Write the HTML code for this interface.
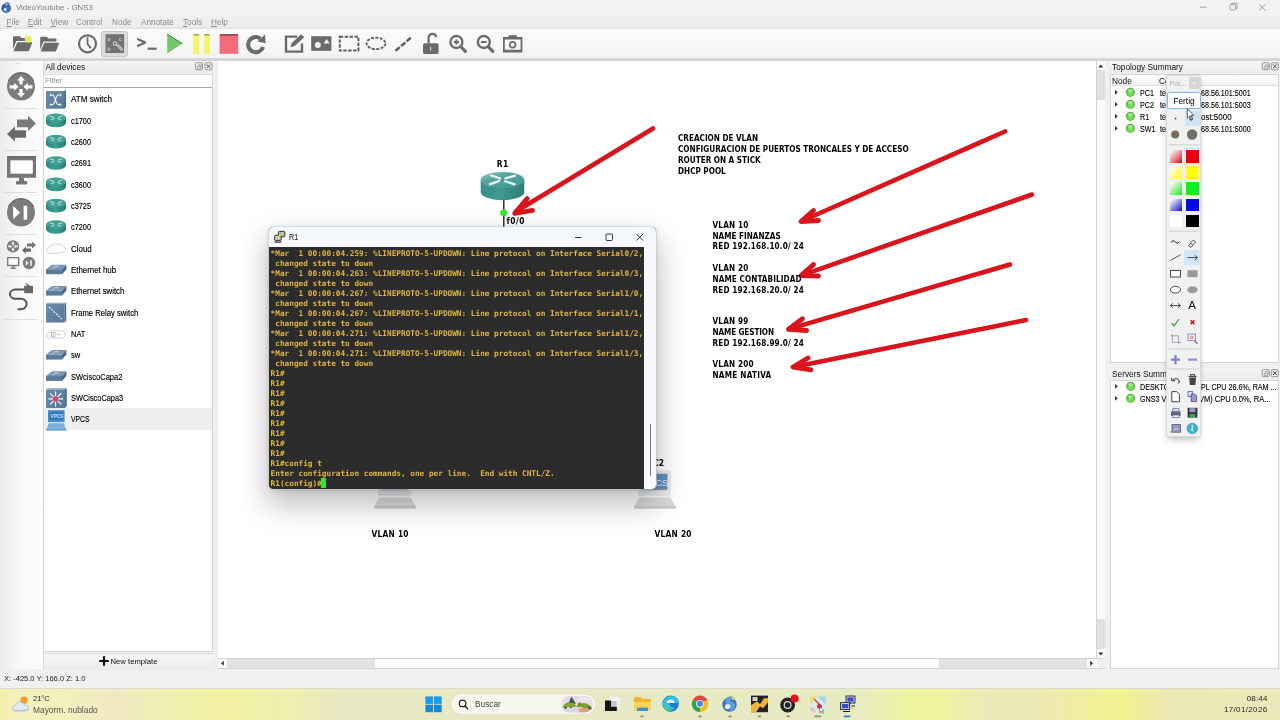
<!DOCTYPE html>
<html lang="es">
<head>
<meta charset="utf-8">
<title>VideoYoutube - GNS3</title>
<style>
*{box-sizing:border-box;margin:0;padding:0}
html,body{width:1280px;height:720px;overflow:hidden;background:#f0f0f0}
body{position:relative;font-family:"Liberation Sans",sans-serif;font-size:8px;color:#111;line-height:1}
#root{position:absolute;left:0;top:0;width:1280px;height:720px;will-change:transform}
.abs{position:absolute}
.t{position:absolute;white-space:pre;line-height:10px;height:10px}
#titlebar{left:0;top:0;width:1280px;height:15px;background:#f3f3f3}
#menubar{left:0;top:15px;width:1280px;height:14px;background:linear-gradient(#f1f1f1 0%,#efefef 20%,#eeeeee 75%,#e2e2e2 100%)}
#menubar .t{color:#8a8a8a;top:3px;font-size:8.2px}
#menubar u{text-decoration-thickness:0.6px;text-underline-offset:1px}
#toolbar{left:0;top:29px;width:1280px;height:30px;background:linear-gradient(#fbfbfb,#f8f8f8 40%,#f2f2f2)}
#tbline{left:0;top:58px;width:1280px;height:3px;background:linear-gradient(#dcdcdc,#d3d3d3 50%,#d8d8d8)}
#lefttb{left:0;top:61px;width:43px;height:608px;background:linear-gradient(90deg,#ececec,#f8f8f8 50%,#fcfcfc)}
.sep{position:absolute;left:4px;width:34px;height:1px;background:#dcdcdc}
.dv{left:71px;font-size:8.200px;color:#000;-webkit-text-stroke:.150px #000;transform:scaleX(.950);transform-origin:0 50%}
#canvas{left:218px;top:61px;width:878px;height:598px;background:#fff}
.ann{font-family:"DejaVu Sans Condensed","DejaVu Sans",sans-serif;font-weight:bold;color:#000}

.ann.n{font-size:8.100px}
#con{left:269px;top:227px;width:387px;height:261.500px;border-radius:4.500px;overflow:hidden;box-shadow:0 0 0 .600px #c9ccd2,0 14px 30px 2px rgba(0,0,0,.260),0 1px 5px rgba(0,0,0,.160);background:#2b2b2b}
#contitle{left:0;top:0;width:387px;height:20.500px;background:#f4f7fc}
#conbody{left:0;top:20.300px;width:375px;height:241.200px;background:#2c2c2c;padding:1.400px 0 0 1.600px;font-family:"DejaVu Sans Mono","Liberation Mono",monospace;font-weight:bold;font-size:7.740px;color:#e0b640;overflow:hidden}
.ln{position:relative;height:10px;line-height:10px;white-space:pre}
.cur{position:absolute;left:50.800px;top:-.300px;width:4.700px;height:10.200px;background:#2ee82e}

.rt{font-size:8.300px;color:#000;-webkit-text-stroke:.120px #000;transform:scaleX(.86);transform-origin:0 50%}
.tk{font-size:8px;color:#222}
#pal{left:1165.900px;top:75.200px;width:35.500px;height:362.300px;background:#f1f1f1;border:.700px solid #dadada;border-radius:2px;box-shadow:0 4px 7px -2px rgba(0,0,0,.280),0 0 2px rgba(0,0,0,.080)}
#statusbar{left:0;top:670px;width:1280px;height:18px;background:#f0f0f0}
#taskbar{left:0;top:688px;width:1280px;height:32px;background:linear-gradient(90deg,#f3f0a8 0%,#f4f1be 1.500%,#f3f0bc 5%,#f0e8c4 9%,#efeeb0 12.500%,#f2f2a0 17.500%,#eeeeb0 23%,#e7e9c2 26.500%,#e6e9c4 45%,#e7ebc2 67%,#eef5a0 71%,#eff39c 73%,#ece9b8 77.400%,#ede9b4 81%,#f1f294 86.400%,#f1f290 87.700%,#ece8b4 91.500%,#ede9bc 100%);border-top:1px solid #dcdccc}
</style>
</head>
<body>
<div id="root">
<!-- title bar -->
<div id="titlebar" class="abs">
  <div class="t" style="left:16px;top:3px;color:#7a7a7a;font-size:8.100px;transform:scaleX(.970);transform-origin:0 50%">VideoYoutube - GNS3</div>
</div>
<svg class="abs" style="left:1190px;top:0" width="90" height="15" viewBox="1190 0 90 15"><g fill="none" stroke="#9a9a9a" stroke-width=".900"><path d="M1200 7.200h6.500"/><rect x="1230" y="4.600" width="5.400" height="5.400" rx="1"/><path d="M1231.600 4.400v-1.200h5.400v5.400h-1.400"/><path d="M1259 4l6.500 6.500M1265.500 4l-6.500 6.500"/></g></svg>
<svg class="abs" style="left:1px;top:1px" width="12" height="13" viewBox="0 0 12 13"><circle cx="5.200" cy="7.200" r="4.800" fill="#2f5aa2"/><path d="M3.400 2.400 q3.600-2.600 5.800 .400 q-2.600-.400-3 1.400 q4 .400 3.600 3.800 q-.600 3-4.200 3 q2.200-2 0-3.400 q-3.400-1.200-2.200-5.200z" fill="#3a6fb8"/><path d="M2 9 q2.600 3.400 6.400 1.600 q-3 .400-4-2z" fill="#3aa0a4"/><circle cx="4.200" cy="8.200" r="1.500" fill="#d6eef4"/><circle cx="5.600" cy="3.200" r="1" fill="#c8d4f4"/></svg>
<div id="menubar" class="abs">
  <div class="t" style="left:6.600px"><u>F</u>ile</div>
  <div class="t" style="left:27.700px"><u>E</u>dit</div>
  <div class="t" style="left:50.500px"><u>V</u>iew</div>
  <div class="t" style="left:76px">Control</div>
  <div class="t" style="left:112px">Node</div>
  <div class="t" style="left:141px">Annotate</div>
  <div class="t" style="left:183px"><u>T</u>ools</div>
  <div class="t" style="left:211px"><u>H</u>elp</div>
</div>
<div id="toolbar" class="abs"></div>
<div id="tbline" class="abs"></div>
<svg class="abs" style="left:0;top:0" width="560" height="61" viewBox="0 0 560 61">
<g fill="#6b6b6b" stroke="none">
<!-- new project folder -->
<path d="M13 37.2 q0-1 1-1 h6 l1.6 1.8 h7.2 q1 0 1 1 v2 h-13.4 l-3.4 8.2z"/>
<path d="M17.4 42.2 h15 l-3.6 9 h-15.4z"/>
<circle cx="28.2" cy="39.2" r="3.4" fill="#e6ec5a"/>
<!-- open folder -->
<path d="M40.2 37.8 q0-1 1-1 h5.6 l1.6 1.8 h7 q1 0 1 1 v2 h-12.8 l-3.4 8.2z"/>
<path d="M44.4 42.8 h15 l-3.6 8.6 h-15.2z"/>
<!-- clock -->
<circle cx="87.5" cy="43.8" r="8.5" fill="none" stroke="#6b6b6b" stroke-width="2.2"/>
<path d="M87.5 38 v6.2 l3 3.4" fill="none" stroke="#6b6b6b" stroke-width="1.8" stroke-linecap="round" stroke-linejoin="round"/>
<!-- abc pressed -->
<rect x="101.5" y="31.5" width="26" height="25" rx="2" fill="#dcdcdc" stroke="#c6c6c6" stroke-width="1"/>
<rect x="105.5" y="34.2" width="18.6" height="18.8" fill="#727272"/>
<g fill="none" stroke="#c9c9c9" stroke-width="1.2" stroke-linecap="round">
<circle cx="115" cy="43.6" r="1.7"/>
<path d="M116.4 45 l5.4 5.6 M118 44.4 l4.6 4.8"/>
</g>
<!-- console -->
<path d="M137 37.8 l9 3.6 v2.2 l-9 3.6 v-2.3 l5.6-2.4 l-5.6-2.4z"/>
<rect x="147.6" y="47.6" width="9" height="2.2"/>
<!-- reload -->
<path d="M263 47 a7.600 7.600 0 1 1 -2.600 -8.400" fill="none" stroke="#6b6b6b" stroke-width="4"/>
<path d="M257.400 41.400 l8.200 1.800 l-.600-8.600z"/>
<!-- edit note -->
<path d="M284.800 36.600 h12.400 M286 35.400 v17.400 M284.800 51.600 h18.400 M302 43.400 v9.400" fill="none" stroke="#6b6b6b" stroke-width="2.400"/>
<path d="M290.400 47.200 l1.400-4.200 l9.400-8.800 l3 3 l-9.600 8.800z"/>
<!-- image -->
<rect x="311.2" y="36.2" width="20.2" height="14.6"/>
<circle cx="317.8" cy="45" r="3" fill="#f4f4f4"/>
<path d="M323.6 43.6 l3-4.6 l3 4.6z" fill="#f4f4f4"/>
<!-- lock -->
<rect x="423" y="43.2" width="15.6" height="10.8" rx="1.6"/>
<path d="M428.6 43.6 v-5.4 q0-4.4 4-4.4 q3.2 0 3.6 3.4" fill="none" stroke="#6b6b6b" stroke-width="2.2"/>
<rect x="430.2" y="46.8" width="1" height="3.8" fill="#dedede"/>
<!-- camera -->
<path d="M508 38 l.6-2.8 h8 l.6 2.8z"/>
<path d="M503 37 h19.4 v15.6 h-19.4z M504.8 39.4 v10.4 h15.8 v-10.4z" fill-rule="evenodd"/>
<circle cx="512.6" cy="44.8" r="2.9" fill="none" stroke="#6b6b6b" stroke-width="1.7"/>
</g>
<g font-family="Liberation Sans, sans-serif" font-size="5.5" fill="#c9c9c9" font-weight="bold">
<text x="107.2" y="41">a</text><text x="118.8" y="41">c</text><text x="107.2" y="51.2">b</text>
</g>
<!-- rect dashed -->
<rect x="339.8" y="36.8" width="18.6" height="13.8" fill="none" stroke="#5e5e5e" stroke-width="2" stroke-dasharray="3.400 1.500"/>
<ellipse cx="376" cy="43.4" rx="9.4" ry="5.8" fill="none" stroke="#5e5e5e" stroke-width="1.800" stroke-dasharray="3 1.400"/>
<path d="M395.600 50.800 L411.400 37.200" stroke="#5e5e5e" stroke-width="2.500" stroke-dasharray="5.600 1.600" fill="none"/>
<!-- zoom in/out -->
<g fill="none" stroke="#6b6b6b" stroke-width="2.400">
<circle cx="456.400" cy="42" r="6"/><path d="M461.200 47 l4.200 4.400" stroke-width="3.200" stroke-linecap="round"/>
<path d="M453.800 42 h5.200 M456.400 39.400 v5.200" stroke-width="2"/>
<circle cx="483.800" cy="42" r="6"/><path d="M488.600 47 l4.200 4.400" stroke-width="3.200" stroke-linecap="round"/>
<path d="M481 42 h5.600" stroke-width="2"/>
</g>
<!-- play / pause / stop -->
<path d="M167.2 34.2 L182.4 43.6 L167.2 53.6z" fill="#72c96a"/>
<path d="M167.2 34.2 L182.4 43.6" stroke="#3f7a3a" stroke-width="1" fill="none"/>
<rect x="193.4" y="34.4" width="6" height="19.6" fill="#f4f46c"/><rect x="204" y="34.4" width="6" height="19.6" fill="#f4f46c"/>
<rect x="193.8" y="34.2" width="5.2" height="1.2" fill="#8d8a3a"/><rect x="204.4" y="34.2" width="5.2" height="1.2" fill="#8d8a3a"/>
<rect x="219.6" y="34.4" width="18.6" height="19.4" fill="#f26d7c"/>
<rect x="219.8" y="34.2" width="18.2" height="1.4" fill="#8a3940"/>
</svg>
<div id="lefttb" class="abs"></div>
<!-- left device toolbar -->
<svg class="abs" style="left:0;top:61px" width="43" height="270" viewBox="0 61 43 270">
<g stroke="#dedede" stroke-width="1"><path d="M5 108.5h32M5 150.5h32M5 192.5h32M5 234.5h32M5 276.5h32M5 319.5h32"/><path d="M16 63.5h5" stroke="#e2e2e2"/></g>
<g fill="#7c7c7c">
<circle cx="21" cy="86.6" r="14"/>
<path d="M8.2 81 a14 14 0 0 1 25.6 0" fill="none" stroke="#5e5e5e" stroke-width="1"/>
<g fill="#fff">
<path d="M21 76 l4 4.4 h-2.4 v4 h-3.2 v-4 h-2.4z"/>
<path d="M21 97.4 l4 -4.4 h-2.4 v-4 h-3.2 v4 h-2.4z"/>
<path d="M18.6 86.8 l-4.4 -4 v2.4 h-4.6 v3.2 h4.6 v2.4z"/>
<path d="M23.4 86.8 l4.4 -4 v2.4 h4.6 v3.2 h-4.6 v2.4z"/>
</g>
<!-- switch arrows -->
<path d="M17 119.6 h11 v-3.8 l8 7.6 l-8 7.6 v-3.8 h-11z" fill="#7a7a7a"/>
<path d="M26 130.2 h-11 v-3.8 l-8 7.6 l8 7.6 v-3.8 h11z" fill="#6a6a6a"/>
<!-- monitor -->
<path d="M7 156.4 h29 v21.4 h-29z M10.6 160.6 v12.8 h22 v-12.8z" fill-rule="evenodd" fill="#767676"/>
<rect x="7" y="156.2" width="29" height="1.2" fill="#5c5c5c"/>
<rect x="10.6" y="160.6" width="22" height="12.8" fill="#fdfdfd"/>
<rect x="19" y="177.6" width="5" height="3.6" fill="#767676"/><rect x="16" y="181" width="11.2" height="3.6" rx="1" fill="#767676"/>
<!-- play/pause circle -->
<circle cx="21" cy="212.6" r="14"/>
<path d="M8.2 207 a14 14 0 0 1 25.6 0" fill="none" stroke="#5e5e5e" stroke-width="1"/>
<path d="M13.2 206 l7 6.6 l-7 6.6z" fill="#fff"/><rect x="23.6" y="205.8" width="3.6" height="13.8" fill="#fff"/>
<!-- small four -->
<circle cx="13" cy="246.4" r="6.2"/>
<g fill="#f4f4f4"><path d="M13 241.6l1.8 2h-1v1.8h-1.6v-1.8h-1z"/><path d="M13 251.2l1.8-2h-1v-1.8h-1.6v1.8h-1z"/><path d="M12 246.4l-2-1.8v1h-1.8v1.600h1.8v1z"/><path d="M14 246.4l2-1.8v1h1.800v1.600h-1.800v1z"/></g>
<path d="M27 243.400h5v-2l4 3.600l-4 3.600v-2h-5z" fill="#777"/><path d="M31 248.600h-5v-2l-4 3.600l4 3.600v-2h5z" fill="#6a6a6a"/>
<path d="M7 257h12.400v9.200h-12.400z M8.600 258.600v6h9.200v-6z" fill-rule="evenodd"/><rect x="8.600" y="258.600" width="9.200" height="6" fill="#fcfcfc"/><rect x="12.200" y="266" width="2" height="1.800"/><rect x="10.600" y="267.600" width="5.200" height="1.400"/>
<circle cx="29" cy="263" r="6.200"/><path d="M25.800 260.200l3 2.800l-3 2.800z" fill="#f4f4f4"/><rect x="30.200" y="260.200" width="1.600" height="5.600" fill="#f4f4f4"/>
<!-- cable -->
<path d="M24.4 289.600 h-9 a5.400 4.600 0 0 0 0 9.200 h5.600 a5.600 5.200 0 0 1 0 10.400 h-2.600" fill="none" stroke="#555" stroke-width="2" stroke-linecap="round"/>
<rect x="24.200" y="285.800" width="8.800" height="7.400" fill="#666"/><path d="M25.400 282.600 l4.600 3.400 h-2.800z" fill="#555"/>
</g>
</svg>

<!-- All devices dock -->
<div class="abs" style="left:43px;top:61px;width:171px;height:12px;background:linear-gradient(#f4f4f4,#ebebeb)"></div>
<div class="t" style="left:45.500px;top:61.600px;font-size:8.300px;color:#111">All devices</div>
<div class="abs" style="left:42.500px;top:61px;width:1px;height:609px;background:#d8d8d8"></div>
<svg class="abs" style="left:194px;top:62px" width="20" height="9" viewBox="194 62 20 9"><g fill="none" stroke="#8c8c8c" stroke-width="0.900"><rect x="195.500" y="62.800" width="7" height="7" rx="1"/><rect x="205" y="62.800" width="7" height="7" rx="1"/><path d="M206.600 64.400l3.800 3.800M210.400 64.400l-3.800 3.800" stroke="#444" stroke-width="1"/><path d="M197.400 66.400h3.200v2.400h-3.200z M198.600 66.400v-1.600h3v2.400h-1" stroke="#8c8c8c" stroke-width="0.700"/></g></svg>
<div class="abs" style="left:42.800px;top:73.500px;width:170.200px;height:14px;background:#fff;border:1px solid #dcdcdc;border-bottom-color:#a9a9a9"></div>
<div class="t" style="left:45px;top:76px;font-size:7.800px;color:#8a8a8a">Filter</div>
<div class="abs" style="left:42.800px;top:87.500px;width:170.200px;height:564px;background:#fff;border:1px solid #d4d4d4;border-top:none"></div>
<div class="t dv" style="top:95.20px;transform:scaleX(0.986)">ATM switch</div>
<div class="t dv" style="top:116.53px;transform:scaleX(0.896)">c1700</div>
<div class="t dv" style="top:137.87px;transform:scaleX(0.896)">c2600</div>
<div class="t dv" style="top:159.20px;transform:scaleX(0.896)">c2691</div>
<div class="t dv" style="top:180.53px;transform:scaleX(0.896)">c3600</div>
<div class="t dv" style="top:201.87px;transform:scaleX(0.896)">c3725</div>
<div class="t dv" style="top:223.20px;transform:scaleX(0.896)">c7200</div>
<div class="t dv" style="top:244.53px;transform:scaleX(0.972)">Cloud</div>
<div class="t dv" style="top:265.86px;transform:scaleX(0.96)">Ethernet hub</div>
<div class="t dv" style="top:287.20px;transform:scaleX(0.952)">Ethernet switch</div>
<div class="t dv" style="top:308.53px;transform:scaleX(0.935)">Frame Relay switch</div>
<div class="t dv" style="top:329.86px;transform:scaleX(0.912)">NAT</div>
<div class="t dv" style="top:351.20px;transform:scaleX(0.919)">sw</div>
<div class="t dv" style="top:372.53px;transform:scaleX(0.918)">SWciscoCapa2</div>
<div class="t dv" style="top:393.86px;transform:scaleX(0.903)">SWCiscoCapa3</div>
<div class="abs" style="left:44px;top:408.02px;width:168px;height:21.6px;background:#efefef"></div>
<div class="t dv" style="top:415.20px;transform:scaleX(0.834)">VPCS</div>
<svg class="abs" style="left:0;top:0" width="220" height="440" viewBox="0 0 220 440">
<defs><linearGradient id="g-rt" x1="0" x2="1"><stop offset="0" stop-color="#2c8c82"/><stop offset=".500" stop-color="#3a9f94"/><stop offset="1" stop-color="#277d74"/></linearGradient>
<linearGradient id="g-bl" x1="0" x2="1" y1="0" y2="1"><stop offset="0" stop-color="#6c8cab"/><stop offset="1" stop-color="#56779a"/></linearGradient>
</defs>
<g transform="translate(46 89.60)"><path d="M0 1.600 h18.400 l1.600-1.400 v17 l-1.600 1.600 h-18.400z" fill="#5d81a6"/><path d="M18.400 1.600l1.600-1.400v17l-1.600 1.600z" fill="#456a90"/>
<rect x="0" y="1.600" width="18.400" height="17.200" fill="url(#g-bl)"/>
<g stroke="#fff" stroke-width="1.100" fill="none"><path d="M4 5.400h2.400c3 0 3 9.600 6 9.600h2.600M4 15h2.400c3 0 3-9.600 6-9.600h2.600"/><path d="M13.800 4.200l1.400 1.200l-1.400 1.200M13.800 13.800l1.400 1.200l-1.400 1.200M5.200 4.200l-1.400 1.200l1.400 1.200M5.200 13.800l-1.400 1.200l1.400 1.200" stroke-width=".800"/></g></g>
<g transform="translate(46 110.33)"><path d="M0 7.400 v5.200 a10 4.200 0 0 0 20 0 v-5.200z" fill="url(#g-rt)"/>
<ellipse cx="10" cy="7.400" rx="10" ry="4.200" fill="#43a096"/>
<g stroke="#cfeae5" stroke-width=".900" fill="none"><path d="M3.600 5.800l4.400 1.200M16.400 5.800l-4.400 1.200M5 9.200l3.400-1M15 9.200l-3.400-1"/></g></g>
<g transform="translate(46 131.67)"><path d="M0 7.400 v5.200 a10 4.200 0 0 0 20 0 v-5.200z" fill="url(#g-rt)"/>
<ellipse cx="10" cy="7.400" rx="10" ry="4.200" fill="#43a096"/>
<g stroke="#cfeae5" stroke-width=".900" fill="none"><path d="M3.600 5.800l4.400 1.200M16.400 5.800l-4.400 1.200M5 9.200l3.400-1M15 9.200l-3.400-1"/></g></g>
<g transform="translate(46 153.00)"><path d="M0 7.400 v5.200 a10 4.200 0 0 0 20 0 v-5.200z" fill="url(#g-rt)"/>
<ellipse cx="10" cy="7.400" rx="10" ry="4.200" fill="#43a096"/>
<g stroke="#cfeae5" stroke-width=".900" fill="none"><path d="M3.600 5.800l4.400 1.200M16.400 5.800l-4.400 1.200M5 9.200l3.400-1M15 9.200l-3.400-1"/></g></g>
<g transform="translate(46 174.33)"><path d="M0 7.400 v5.200 a10 4.200 0 0 0 20 0 v-5.200z" fill="url(#g-rt)"/>
<ellipse cx="10" cy="7.400" rx="10" ry="4.200" fill="#43a096"/>
<g stroke="#cfeae5" stroke-width=".900" fill="none"><path d="M3.600 5.800l4.400 1.200M16.400 5.800l-4.400 1.200M5 9.200l3.400-1M15 9.200l-3.400-1"/></g></g>
<g transform="translate(46 195.66)"><path d="M0 7.400 v5.200 a10 4.200 0 0 0 20 0 v-5.200z" fill="url(#g-rt)"/>
<ellipse cx="10" cy="7.400" rx="10" ry="4.200" fill="#43a096"/>
<g stroke="#cfeae5" stroke-width=".900" fill="none"><path d="M3.600 5.800l4.400 1.200M16.400 5.800l-4.400 1.200M5 9.200l3.400-1M15 9.200l-3.400-1"/></g></g>
<g transform="translate(46 217.00)"><path d="M0 7.400 v5.200 a10 4.200 0 0 0 20 0 v-5.200z" fill="url(#g-rt)"/>
<ellipse cx="10" cy="7.400" rx="10" ry="4.200" fill="#43a096"/>
<g stroke="#cfeae5" stroke-width=".900" fill="none"><path d="M3.600 5.800l4.400 1.200M16.400 5.800l-4.400 1.200M5 9.200l3.400-1M15 9.200l-3.400-1"/></g></g>
<g transform="translate(46 238.93)"><path d="M4.400 14.400 q-4 0-3.800-3.200 q.200-2.600 3-2.800 q.600-3 4-2.600 q1.800-2 4.400-.400 q3.600-1 4.800 1.800 q3 .600 2.600 3.400 q-.200 2.600-3.400 2.800 q-2 1.600-4.400.600 q-2.600 1.400-4.600 0 q-1.400.800-2.600.400z" fill="#fdfdfd" stroke="#c4c9cc" stroke-width=".800"/></g>
<g transform="translate(46 260.26)"><path d="M0 9 l6-4.600 h14.400 l-4.400 4.600z" fill="#7a98b5"/>
<path d="M0 9 h16 v5 h-16z" fill="#5b7b9b"/>
<path d="M16 9 l4.400-4.600 v4.600 l-4.400 5z" fill="#4a6987"/>
<path d="M5.400 7.600h3l1.400-1.400h3.400M8 6h3" stroke="#c9d8e6" stroke-width=".700" fill="none"/></g>
<g transform="translate(46 281.60)"><path d="M0 9 l6-4.600 h14.400 l-4.400 4.600z" fill="#7a98b5"/>
<path d="M0 9 h16 v5 h-16z" fill="#5b7b9b"/>
<path d="M16 9 l4.400-4.600 v4.600 l-4.400 5z" fill="#4a6987"/>
<path d="M5.400 7.600h3l1.400-1.400h3.400M8 6h3" stroke="#c9d8e6" stroke-width=".700" fill="none"/></g>
<g transform="translate(46 302.93)"><rect x="0" y=".800" width="18.600" height="18.800" fill="url(#g-bl)"/><path d="M18.600 .800l1.600-1v17.800l-1.600 2z" fill="#446a90"/><path d="M0 .800l1.400-1h18.800l-1.600 1z" fill="#7c9dbd"/>
<path d="M3 4.200l13 12" stroke="#fff" stroke-width="1.100" stroke-dasharray="2 1.200" fill="none"/></g>
<g transform="translate(46 324.26)"><path d="M3.400 13.800 q-3.200 0-3-2.800 q0-2.400 2.600-2.800 q1-2 3.400-1.800 h9 q2.800-.200 3.400 2.400 q1.200 2.400-.800 4 q-1.200 1.200-3.400 1z" fill="#fdfdfd" stroke="#c4c9cc" stroke-width=".800"/><rect x="5.400" y="8" width="3.600" height="4.400" fill="none" stroke="#aab4bd" stroke-width=".700"/><path d="M7.200 8v4.400M10.600 10.200h4" stroke="#aab4bd" stroke-width=".700"/></g>
<g transform="translate(46 345.60)"><path d="M0 9 l6-4.600 h14.400 l-4.400 4.600z" fill="#7a98b5"/>
<path d="M0 9 h16 v5 h-16z" fill="#5b7b9b"/>
<path d="M16 9 l4.400-4.600 v4.600 l-4.400 5z" fill="#4a6987"/>
<path d="M5.400 7.600h3l1.400-1.400h3.400M8 6h3" stroke="#c9d8e6" stroke-width=".700" fill="none"/></g>
<g transform="translate(46 366.93)"><path d="M0 9 l6-4.600 h14.400 l-4.400 4.600z" fill="#7a98b5"/>
<path d="M0 9 h16 v5 h-16z" fill="#5b7b9b"/>
<path d="M16 9 l4.400-4.600 v4.600 l-4.400 5z" fill="#4a6987"/>
<path d="M5.400 7.600h3l1.400-1.400h3.400M8 6h3" stroke="#c9d8e6" stroke-width=".700" fill="none"/></g>
<g transform="translate(46 388.26)"><rect x="0" y="1.200" width="19" height="18.600" fill="url(#g-bl)"/><path d="M19 1.200l1.800-1.200v17.600l-1.800 2.200z" fill="#446a90"/><path d="M0 1.200l1.600-1.200h19.200l-1.800 1.200z" fill="#7c9dbd"/>
<g stroke="#fff" stroke-width="1.100"><path d="M9.600 3.200v15M2.400 10.600h14.600M4.200 5.200l11 11M15.200 5.200l-11 11"/></g>
<circle cx="9.600" cy="10.700" r="2.700" fill="#e2416d"/></g>
<g transform="translate(46 409.60)"><rect x="2" y="0.600" width="16.600" height="12" fill="#4a90d0"/><rect x="3.400" y="2" width="13.800" height="8.600" fill="#2f78c2"/>
<path d="M2.600 13.600h15.400l2 6.400h-19.400z" fill="#7eb2dd"/><path d="M0 19.600h20.600v1.400h-20.600z" fill="#5b98cc"/>
<text x="4.600" y="8.200" font-family="Liberation Sans, sans-serif" font-size="4.600" font-weight="bold" fill="#cfe4f6">VPCS</text></g>
</svg>
<div class="abs" style="left:44px;top:652.500px;width:169px;height:17px;background:linear-gradient(#f6f6f6,#ececec);border-top:1px solid #dcdcdc"></div>
<svg class="abs" style="left:98px;top:655px" width="12" height="12" viewBox="0 0 12 12"><path d="M6 1.200v9.600M1.200 6h9.600" stroke="#111" stroke-width="2.200"/></svg>
<div class="t" style="left:110.500px;top:657px;font-size:7.700px;color:#111">New template</div>

<div id="canvas" class="abs"></div>
<!-- canvas contents -->
<svg class="abs" style="left:218px;top:61px" width="878" height="598" viewBox="218 61 878 598">
<defs>
<linearGradient id="g-r1" x1="0" x2="1"><stop offset="0" stop-color="#3a8f88"/><stop offset=".45" stop-color="#3f9990"/><stop offset="1" stop-color="#2c7f78"/></linearGradient>
<linearGradient id="g-r1t" x1="0" x2="1" y1="0" y2="1"><stop offset="0" stop-color="#93c9c4"/><stop offset=".350" stop-color="#55a59e"/><stop offset="1" stop-color="#3f968e"/></linearGradient>
</defs>
<!-- link -->
<path d="M503.8 196 V228" stroke="#111" stroke-width="1.3"/>
<!-- R1 router -->
<path d="M480.700 180 v12 a21.800 8.200 0 0 0 43.600 0 v-12z" fill="url(#g-r1)"/>
<ellipse cx="502.500" cy="180" rx="21.800" ry="8.100" fill="url(#g-r1t)"/>
<g stroke="#e6f7f5" stroke-width="2.300" fill="none" stroke-linecap="butt"><path d="M490 175 l11 3.600 M516 175.400 l-11.400 3.200 M489 184.600 l11-4 M515.600 184.600 l-11.400-3.600"/></g>
<circle cx="503.800" cy="212.800" r="3.500" fill="#2ee82e"/>
<!-- PCs behind console -->
<g>
<rect x="378.09999999999997" y="470.6" width="33" height="25.6" rx="1" fill="#e6e8ea"/>
<rect x="381.09999999999997" y="473.8" width="26.6" height="15.8" fill="#5f8fc0"/>
<rect x="382.5" y="488.8" width="24.4" height="1.4" fill="#8d97a3"/>
<path d="M379.3 497.4 h31.4 l5.2 9.600 q.600 1.600-1.600 1.600 h-38.600 q-2.200 0-1.600-1.600z" fill="#d8dadc"/>
<path d="M374.09999999999997 506 h41.600 l.600 1 q.600 1.600-1.600 1.600 h-38.600 q-2.200 0-1.600-1.600z" fill="#c8cacd"/>
<rect x="637.8" y="470.6" width="33" height="25.6" rx="1" fill="#e6e8ea"/>
<rect x="640.8" y="473.8" width="26.6" height="15.8" fill="#5f8fc0"/>
<rect x="642.1999999999999" y="488.8" width="24.4" height="1.4" fill="#8d97a3"/>
<path d="M639.0 497.4 h31.4 l5.2 9.600 q.600 1.600-1.600 1.600 h-38.600 q-2.200 0-1.600-1.600z" fill="#d8dadc"/>
<path d="M633.8 506 h41.600 l.600 1 q.600 1.600-1.600 1.600 h-38.600 q-2.200 0-1.600-1.600z" fill="#c8cacd"/>
<text x="655.200" y="486" font-family="Liberation Sans, sans-serif" font-size="9.600" fill="#e8f1f9">CS</text>
</g>
<!-- red arrows -->
<g fill="none" stroke="#d9141c" stroke-width="4.600" stroke-linecap="round" stroke-linejoin="round">
<path d="M653 128.500 L516 211.500"/><path d="M527.200 198.600 L514.800 213.300 L532.400 210.400" stroke-width="4.900"/>
<path d="M1005 131.500 L803 220.500"/><path d="M813.500 210.500 L801 221.500 L818.500 220.500" stroke-width="4.900"/>
<path d="M1032 194.500 L803 274.800"/><path d="M813.500 264.500 L801 275.600 L818.500 276" stroke-width="4.900"/>
<path d="M1010 264.500 L791 328.400"/><path d="M802.500 318.800 L788.500 329.200 L806.500 330.500" stroke-width="4.900"/>
<path d="M1026 320 L796 366.400"/><path d="M808 358 L793 367 L811 369.800" stroke-width="4.900"/>
</g>
</svg>
<div class="t ann" style="left:496.800px;top:159px;font-size:8.400px;letter-spacing:.500px">R1</div>
<div class="t ann" style="left:506.500px;top:216px;font-size:8.400px;letter-spacing:.500px">f0/0</div>
<div class="t ann" style="left:653.300px;top:457.600px;font-size:8.400px">C2</div>
<div class="t ann" style="left:371.500px;top:528.600px;font-size:8.300px;letter-spacing:.250px">VLAN 10</div>
<div class="t ann" style="left:654.500px;top:528.600px;font-size:8.300px;letter-spacing:.250px">VLAN 20</div>
<div class="t ann n" style="left:678px;top:133px">CREACION DE VLAN</div>
<div class="t ann n" style="left:678px;top:144px">CONFIGURACION DE PUERTOS TRONCALES Y DE ACCESO</div>
<div class="t ann n" style="left:678px;top:155px">ROUTER ON A STICK</div>
<div class="t ann n" style="left:678px;top:166px">DHCP POOL</div>
<div class="t ann n" style="left:712.500px;top:220px;letter-spacing:0.2px">VLAN 10</div>
<div class="t ann n" style="left:712.500px;top:231px">NAME FINANZAS</div>
<div class="t ann n" style="left:712.500px;top:241px;letter-spacing:0.15px">RED 192.168.10.0/ 24</div>
<div class="t ann n" style="left:712.500px;top:263px;letter-spacing:0.2px">VLAN 20</div>
<div class="t ann n" style="left:712.500px;top:274px;letter-spacing:0.1px">NAME CONTABILIDAD</div>
<div class="t ann n" style="left:712.500px;top:285px;letter-spacing:0.15px">RED 192.168.20.0/ 24</div>
<div class="t ann n" style="left:712.500px;top:316px;letter-spacing:0.2px">VLAN 99</div>
<div class="t ann n" style="left:712.500px;top:327px;letter-spacing:-0.1px">NAME GESTION</div>
<div class="t ann n" style="left:712.500px;top:338px;letter-spacing:0.15px">RED 192.168.99.0/ 24</div>
<div class="t ann n" style="left:712.500px;top:359px;letter-spacing:0.2px">VLAN 200</div>
<div class="t ann n" style="left:712.500px;top:370px;letter-spacing:0.27px">NAME NATIVA</div>

<!-- canvas scrollbars -->
<div class="abs" style="left:1095.500px;top:61px;width:10px;height:598px;background:#fbfbfb;border-left:1px solid #d2d2d2;border-right:1px solid #d2d2d2"></div>
<div class="abs" style="left:1097px;top:70px;width:8px;height:30px;background:#e0e0e0"></div>
<div class="abs" style="left:1097px;top:619px;width:8px;height:30px;background:#e0e0e0"></div>
<div class="abs" style="left:218px;top:658px;width:887px;height:10.600px;background:#fbfbfb;border-top:1px solid #d2d2d2;border-bottom:1px solid #d2d2d2"></div>
<div class="abs" style="left:227px;top:659px;width:148px;height:8.600px;background:#e2e2e2"></div>
<div class="abs" style="left:939px;top:659px;width:148px;height:8.600px;background:#e2e2e2"></div>
<div class="abs" style="left:1096.500px;top:659px;width:8px;height:8.600px;background:#efefef"></div>
<svg class="abs" style="left:218px;top:61px" width="888" height="609" viewBox="218 61 888 609"><g fill="#333"><path d="M1098.200 67.400h5l-2.500-3z"/><path d="M1098.200 652.600h5l-2.500 3z"/><path d="M223.800 660.800v5l-2.800-2.500z"/><path d="M1090.200 660.800v5l2.800-2.500z"/></g></svg>

<!-- R1 console window -->
<div id="con" class="abs">
  <div id="contitle" class="abs"></div>
  <svg class="abs" style="left:4px;top:3px" width="14" height="13" viewBox="4 3 14 13"><rect x="9.400" y="4.400" width="6.400" height="5.400" rx="1" fill="#b9bdc2" stroke="#2e2e2e" stroke-width="1"/><rect x="5.600" y="8.400" width="6.600" height="5" rx="1" fill="#c6c9cd" stroke="#2e2e2e" stroke-width="1"/><path d="M5.400 14.600 q3.600 1.200 7 0" stroke="#2e2e2e" stroke-width="1.200" fill="none"/><path d="M12.800 6.200 l-4.600 4.600" stroke="#d6e05a" stroke-width="1.800" stroke-linecap="round"/><path d="M12.200 6 l-1.600 1.400" stroke="#7d8a20" stroke-width=".800"/></svg>
  <div class="t" style="left:20px;top:5.900px;font-size:8.200px;color:#3a3a3a;transform:scaleX(.880);transform-origin:0 50%;-webkit-text-stroke:.200px #3a3a3a">R1</div>
  <svg class="abs" style="left:300px;top:.600px" width="88" height="19" viewBox="300 0 88 19"><g fill="none" stroke="#222" stroke-width=".900"><path d="M306 9.500h6.500"/><rect x="337" y="6" width="6.500" height="6.500" rx="1"/><path d="M367.500 6l6.500 6.500M374 6l-6.500 6.500"/></g></svg>
  <div id="conbody" class="abs">
<div class="ln">*Mar  1 00:00:04.259: %LINEPROTO-5-UPDOWN: Line protocol on Interface Serial0/2,</div>
<div class="ln"> changed state to down</div>
<div class="ln">*Mar  1 00:00:04.263: %LINEPROTO-5-UPDOWN: Line protocol on Interface Serial0/3,</div>
<div class="ln"> changed state to down</div>
<div class="ln">*Mar  1 00:00:04.267: %LINEPROTO-5-UPDOWN: Line protocol on Interface Serial1/0,</div>
<div class="ln"> changed state to down</div>
<div class="ln">*Mar  1 00:00:04.267: %LINEPROTO-5-UPDOWN: Line protocol on Interface Serial1/1,</div>
<div class="ln"> changed state to down</div>
<div class="ln">*Mar  1 00:00:04.271: %LINEPROTO-5-UPDOWN: Line protocol on Interface Serial1/2,</div>
<div class="ln"> changed state to down</div>
<div class="ln">*Mar  1 00:00:04.271: %LINEPROTO-5-UPDOWN: Line protocol on Interface Serial1/3,</div>
<div class="ln"> changed state to down</div>
<div class="ln">R1#</div>
<div class="ln">R1#</div>
<div class="ln">R1#</div>
<div class="ln">R1#</div>
<div class="ln">R1#</div>
<div class="ln">R1#</div>
<div class="ln">R1#</div>
<div class="ln">R1#</div>
<div class="ln">R1#</div>
<div class="ln">R1#config t</div>
<div class="ln">Enter configuration commands, one per line.  End with CNTL/Z.</div>
<div class="ln">R1(config)#<span class="cur"></span></div>
  </div>
  <div class="abs" style="left:375px;top:20px;width:12px;height:242px;background:#f6f8fc"></div>
  <div class="abs" style="left:380.500px;top:197px;width:1.600px;height:52px;background:#777;border-radius:1px"></div>
</div>


<!-- right docks -->
<div class="abs" style="left:1105px;top:61px;width:175px;height:609px;background:#f0f0f0"></div>
<div class="abs" style="left:1109px;top:61px;width:171px;height:12px;background:linear-gradient(#f4f4f4,#ececec)"></div>
<div class="t" style="left:1112px;top:61.600px;font-size:8.300px;color:#111">Topology Summary</div>
<div class="abs" style="left:1109.500px;top:73.500px;width:169px;height:289px;background:#fff;border:1px solid #d4d4d4"></div>
<div class="abs" style="left:1110.500px;top:74.500px;width:167px;height:11px;background:linear-gradient(#fff,#f3f3f3);border-bottom:1px solid #e0e0e0"></div>
<div class="abs" style="left:1157.500px;top:74.500px;width:1px;height:11px;background:#e0e0e0"></div>
<div class="t" style="left:1112px;top:76px;font-size:8.300px;color:#111">Node</div>
<div class="t" style="left:1159px;top:76px;font-size:8.300px;color:#111">Console</div>
<div class="abs" style="left:1109px;top:368px;width:171px;height:11px;background:linear-gradient(#f4f4f4,#ececec)"></div>
<div class="t" style="left:1112px;top:369px;font-size:8.300px;color:#111">Servers Summary</div>
<div class="abs" style="left:1109.500px;top:379.500px;width:169px;height:289px;background:#fff;border:1px solid #d4d4d4"></div>
<div class="t rt" style="left:1140px;top:88.1px">PC1</div><div class="t rt" style="left:1159.500px;top:88.1px">telnet</div><div class="t rt" style="left:1201px;top:88.1px">68.56.101:5001</div>
<div class="t rt" style="left:1140px;top:100.1px">PC2</div><div class="t rt" style="left:1159.500px;top:100.1px">telnet</div><div class="t rt" style="left:1201px;top:100.1px">68.56.101:5003</div>
<div class="t rt" style="left:1140px;top:112.1px">R1</div><div class="t rt" style="left:1159.500px;top:112.1px">telnet</div><div class="t rt" style="left:1201px;top:112.1px;transform:scaleX(.960)">ost:5000</div>
<div class="t rt" style="left:1140px;top:124.1px">SW1</div><div class="t rt" style="left:1159.500px;top:124.1px">telnet</div><div class="t rt" style="left:1201px;top:124.1px">68.56.101:5000</div>
<div class="t rt" style="left:1140px;top:382.1px">DESKTOP</div><div class="t rt" style="left:1201px;top:382.1px">PL CPU 26.6%, RAM ...</div>
<div class="t rt" style="left:1140px;top:394.1px">GNS3 VM</div><div class="t rt" style="left:1198.700px;top:394.1px;transform:scaleX(.900)">VM) CPU 0.0%, RA...</div>
<svg class="abs" style="left:1105px;top:61px" width="175" height="360" viewBox="1105 61 175 360"><defs><radialGradient id="g-led" cx=".5" cy=".6" r=".6"><stop offset="0" stop-color="#8fe86f"/><stop offset=".7" stop-color="#58c43e"/><stop offset="1" stop-color="#6aa85a"/></radialGradient></defs><circle cx="1130.4" cy="92.3" r="4.600" fill="url(#g-led)"/><ellipse cx="1130.4" cy="90.6" rx="2.700" ry="1.700" fill="#b9f0a8" opacity=".700"/><path d="M1115.0 89.89999999999999l2.800 2.400l-2.800 2.400z" fill="#333"/><circle cx="1130.4" cy="104.3" r="4.600" fill="url(#g-led)"/><ellipse cx="1130.4" cy="102.6" rx="2.700" ry="1.700" fill="#b9f0a8" opacity=".700"/><path d="M1115.0 101.89999999999999l2.800 2.400l-2.800 2.400z" fill="#333"/><circle cx="1130.4" cy="116.3" r="4.600" fill="url(#g-led)"/><ellipse cx="1130.4" cy="114.6" rx="2.700" ry="1.700" fill="#b9f0a8" opacity=".700"/><path d="M1115.0 113.89999999999999l2.800 2.400l-2.800 2.400z" fill="#333"/><circle cx="1130.4" cy="128.3" r="4.600" fill="url(#g-led)"/><ellipse cx="1130.4" cy="126.60000000000001" rx="2.700" ry="1.700" fill="#b9f0a8" opacity=".700"/><path d="M1115.0 125.9l2.800 2.400l-2.800 2.400z" fill="#333"/><circle cx="1130.6" cy="386.3" r="4.600" fill="url(#g-led)"/><ellipse cx="1130.6" cy="384.6" rx="2.700" ry="1.700" fill="#b9f0a8" opacity=".700"/><path d="M1115.0 383.90000000000003l2.800 2.400l-2.800 2.400z" fill="#333"/><circle cx="1130.6" cy="398.3" r="4.600" fill="url(#g-led)"/><ellipse cx="1130.6" cy="396.6" rx="2.700" ry="1.700" fill="#b9f0a8" opacity=".700"/><path d="M1115.0 395.90000000000003l2.800 2.400l-2.800 2.400z" fill="#333"/><g fill="none" stroke="#8c8c8c" stroke-width=".900"><rect x="1262.300" y="62.800" width="7" height="7" rx="1"/><rect x="1271.300" y="62.800" width="7" height="7" rx="1"/><path d="M1272.900 64.400l3.800 3.800M1276.700 64.400l-3.800 3.800" stroke="#444" stroke-width="1"/><path d="M1264.200 66.400h3.200v2.400h-3.200z M1265.400 66.400v-1.600h3v2.400h-1" stroke-width=".700"/>
<rect x="1262.300" y="369.600" width="7" height="7" rx="1"/><rect x="1271.300" y="369.600" width="7" height="7" rx="1"/><path d="M1272.900 371.200l3.800 3.800M1276.700 371.200l-3.800 3.800" stroke="#444" stroke-width="1"/><path d="M1264.200 373.200h3.200v2.400h-3.200z M1265.400 373.200v-1.600h3v2.400h-1" stroke-width=".700"/></g>
</svg>

<!-- Pointofix palette -->
<div id="pal" class="abs"></div>
<div class="t" style="left:1169.200px;top:78.800px;font-size:7.500px;color:#a9a9a9">Poi...</div>
<div class="abs" style="left:1188.500px;top:77px;width:11.500px;height:11.500px;background:#d6d6d6"></div>
<div class="abs" style="left:1193px;top:81.500px;width:2.500px;height:2.500px;background:#e6e6e6"></div>
<div class="abs" style="left:1167.200px;top:92.200px;width:33.800px;height:17.200px;background:#fdfdfd;border:1.400px solid #86bbe0;box-shadow:0 0 1.500px #9cc8e8;border-radius:2.500px"></div>
<div class="t" style="left:1173.400px;top:96.300px;font-size:8.300px;color:#000">Fertig</div>
<div class="t" style="left:1188.200px;top:300.200px;font-size:11.500px;color:#111">A</div>
<div class="abs" style="left:1184.500px;top:111px;width:15.500px;height:14.600px;background:#cfe3f5"></div>
<div class="abs" style="left:1184.300px;top:148.300px;width:16px;height:16.600px;background:#d6e7f6"></div>
<div class="abs" style="left:1184.300px;top:250.200px;width:16px;height:15px;background:#d3e6f7"></div>
<div class="abs" style="left:1169.500px;top:150.0px;width:12.200px;height:12.600px;background:linear-gradient(135deg,#fff 5%,#e8a0a8 45%,#e6000e 100%)"></div><div class="abs" style="left:1186.200px;top:150.0px;width:12.400px;height:12.600px;background:#e6000e"></div>
<div class="abs" style="left:1169.500px;top:166.2px;width:12.200px;height:12.600px;background:linear-gradient(135deg,#fff 5%,#ffff9a 45%,#ffff10 100%)"></div><div class="abs" style="left:1186.200px;top:166.2px;width:12.400px;height:12.600px;background:#ffff10"></div>
<div class="abs" style="left:1169.500px;top:182.4px;width:12.200px;height:12.600px;background:linear-gradient(135deg,#fff 5%,#a8f0a8 45%,#10f020 100%)"></div><div class="abs" style="left:1186.200px;top:182.4px;width:12.400px;height:12.600px;background:#10f020"></div>
<div class="abs" style="left:1169.500px;top:198.6px;width:12.200px;height:12.600px;background:linear-gradient(135deg,#fff 5%,#9a9ae8 45%,#0808e8 100%)"></div><div class="abs" style="left:1186.200px;top:198.6px;width:12.400px;height:12.600px;background:#0808e8"></div>
<div class="abs" style="left:1169.500px;top:214.8px;width:12.200px;height:12.600px;background:#fff"></div><div class="abs" style="left:1186.200px;top:214.8px;width:12.400px;height:12.600px;background:#000"></div>
<svg class="abs" style="left:1166px;top:75px" width="37" height="364" viewBox="1166 75 37 364">
<g stroke="#cfcfcf" stroke-width="1"><path d="M1169 144.800h30M1169 231.200h30M1169 349h30M1169 369h30"/></g>
<circle cx="1175.500" cy="118.600" r=".900" fill="#444"/>
<path d="M1189.600 117.600 q1.600-1.800 2.600 0 q.800 2.200-1 2.600 q-1.600 0-1.400-1.600" fill="none" stroke="#333" stroke-width="1"/>
<path d="M1187.300 108.500 v9.500 l2.200-2 l1.700 3.600 l1.300-.600 l-1.700-3.500 h3z" fill="#fff" stroke="#222" stroke-width=".700"/>
<circle cx="1175.200" cy="134.500" r="4" fill="#786b5b"/><circle cx="1192.100" cy="134.500" r="5.200" fill="#6f6f69"/>
<!-- tools -->
<path d="M1171 242.600 q2-3.400 4.200-.600 q2.200 2.800 4.400-.400" fill="none" stroke="#222" stroke-width="1"/>
<path d="M1188.600 245.600 l4.600-5.600 l2.400 1.800 l-4.600 5.600z" fill="#eee" stroke="#333" stroke-width=".800"/><path d="M1190.400 243.400l2.400 1.800" stroke="#333" stroke-width=".700"/>
<path d="M1170.400 260.400 l10-5.600" stroke="#444" stroke-width=".900"/>
<path d="M1187.400 257.600 h10 m-2.600-2.400 l2.600 2.400 l-2.600 2.400" stroke="#335" stroke-width=".900" fill="none"/>
<rect x="1170.600" y="270.400" width="9.800" height="6.600" fill="#fdfdfd" stroke="#333" stroke-width=".900"/>
<rect x="1187.400" y="270.200" width="10.200" height="7" fill="#9a9a9a"/>
<ellipse cx="1175.500" cy="289.700" rx="5" ry="3.400" fill="#fdfdfd" stroke="#333" stroke-width=".900"/>
<ellipse cx="1192.500" cy="289.700" rx="5.200" ry="3.500" fill="#9a9a9a"/>
<path d="M1170.400 305.600h10 m-2.400-2.200l2.400 2.200l-2.400 2.200 m-5.200-4.400l-2.400 2.200l2.400 2.200" stroke="#333" stroke-width=".900" fill="none"/>
<path d="M1171.800 323.200 l2.200 2.600 l5-6.600" stroke="#35b24a" stroke-width="1.400" fill="none"/>
<path d="M1190.600 320.200 l3.800 4 M1194.400 320.200 l-3.800 4" stroke="#c8141c" stroke-width="1.500"/>
<path d="M1172.400 334 v8.400 h8.400 M1170.600 335.800 h8 v8" stroke="#9a9aa8" stroke-width=".900" fill="none"/>
<rect x="1188" y="334" width="7.400" height="6.600" fill="#eef" stroke="#88a" stroke-width=".900"/><circle cx="1191.600" cy="337.400" r="1.300" fill="none" stroke="#c33" stroke-width=".700"/><path d="M1194.800 341l2.600 2.600" stroke="#666" stroke-width="1.300"/>
<path d="M1171 359.600h9M1175.500 355v9.200" stroke="#7d7fd0" stroke-width="2.200"/>
<path d="M1188 359.600h9" stroke="#8d8fd4" stroke-width="2.200"/>
<path d="M1172.400 380.400 q3.600-3.400 6.400-.400 q1.600 2.200-.800 3.600 M1171.600 377.800 l.400 3.200 l3.200-.400" stroke="#333" stroke-width="1" fill="none"/>
<path d="M1188.600 376.400h8M1190.600 376v-1.400h4v1.400" stroke="#333" stroke-width="1" fill="none"/><path d="M1189.200 377.600h6.800l-.600 7.400h-5.600z" fill="#444"/>
<path d="M1171.800 391.600h5l2.600 2.600v7.600h-7.600z" fill="#fdfdfd" stroke="#333" stroke-width=".900"/>
<path d="M1188 391.400h4.400v5.200h-4.400z" fill="#dde" stroke="#55a" stroke-width=".800"/><path d="M1191.200 394.200h3.800l1.600 1.600v5.800h-5.400z" fill="#99c" stroke="#448" stroke-width=".800"/>
<path d="M1171 411.400h9.600v4.600h-9.600z" fill="#668" /><path d="M1173 408.400h5.800l.600 3h-7z" fill="#dde" stroke="#446" stroke-width=".600"/><path d="M1172.600 415h6.600v2.600h-6.600z" fill="#eef" stroke="#446" stroke-width=".600"/>
<rect x="1187.600" y="407.800" width="9.800" height="9.800" fill="#333"/><rect x="1189.400" y="408.200" width="6" height="4" fill="#99c"/><rect x="1189.600" y="414" width="5.600" height="3.400" fill="#3a5"/>
<rect x="1172" y="424.600" width="8.400" height="7.600" fill="#99b" stroke="#557" stroke-width=".800"/><path d="M1173.600 430.800l2.400-3l2 2" stroke="#eef" stroke-width=".700" fill="none"/><path d="M1169.600 432h1.600" stroke="#888" stroke-width=".800"/>
<circle cx="1192.300" cy="428.400" r="5.200" fill="#39b6d6" stroke="#2a93b4" stroke-width=".800"/><rect x="1191.600" y="427.400" width="1.500" height="3.800" fill="#fff"/><rect x="1191.600" y="425" width="1.500" height="1.500" fill="#fff"/>
</svg>
<div id="statusbar" class="abs">
  <div class="t" style="left:4px;top:3.800px;font-size:8px;color:#222;transform:scaleX(.940);transform-origin:0 50%">X: -425.0 Y: 166.0 Z: 1.0</div>
</div>
<div id="taskbar" class="abs"></div>
<svg class="abs" style="left:0;top:688px" width="1280" height="32" viewBox="0 688 1280 32">
<!-- weather -->
<circle cx="24" cy="700.200" r="3.700" fill="#f0a030"/>
<path d="M15.600 711 q-3.200 0-3.200-2.800 q0-2.600 3-2.800 q1-3.600 4.800-3.400 q3.400 .200 4.200 3.200 q4.200-.200 4.400 3 q0 2.800-3.400 2.800z" fill="#e2eaf8" stroke="#a4b4d4" stroke-width=".700"/>
<path d="M13 709.400 q7 1.600 15.600-.400 q-.600 2-3.200 2 h-9.800 q-2 0-2.600-1.600z" fill="#b2c0e0"/>
<!-- windows logo -->
<g fill="#1a9bea"><rect x="425.400" y="696.400" width="7.700" height="7.500"/><rect x="434" y="696.400" width="7.700" height="7.500"/><rect x="425.400" y="704.700" width="7.700" height="7.500" fill="#1488dc"/><rect x="434" y="704.700" width="7.700" height="7.500" fill="#1488dc"/></g>
<!-- search -->
<rect x="451" y="693.800" width="144.500" height="20.600" rx="10.300" fill="#f7f7ef" stroke="#deddc0" stroke-width=".800"/>
<circle cx="462.600" cy="703.400" r="3.300" fill="none" stroke="#222" stroke-width="1.200"/><path d="M465 706l2.600 2.800" stroke="#222" stroke-width="1.300" stroke-linecap="round"/>
<g><clipPath id="cp-ls"><rect x="561" y="696" width="32" height="16.600" rx="8.300"/></clipPath>
<g clip-path="url(#cp-ls)">
<rect x="561" y="696" width="32" height="16.600" fill="#e6dcea"/>
<ellipse cx="584" cy="699" rx="6" ry="2" fill="#f2e4ec"/>
<path d="M568.600 703 l2.800-6.400 l1.600 2.400 l3 5z" fill="#46564e"/>
<path d="M563 706 q3-4.600 8-3.600 q4 1 6 4 l-14 2z" fill="#86a62e"/>
<path d="M577 705.600 q2-3.400 4-2.200 q5-1.400 9 2.200 q2 1.600 2.400 3.600 h-15z" fill="#7e9e30"/>
<path d="M577.400 704.400 q1.400-2.400 3-1.600 l1 2.800z" fill="#5f8430"/>
<path d="M561 707 h20 l6 2 l6 -.400 v5 h-32z" fill="#d4d8de"/>
<path d="M579 708.400 q6-1 11 .400 q-1 3.400-6 3.800 q-4 0-5-1.600z" fill="#dca070"/>
<path d="M563.400 707.400 l2.400-.800 l1.600 1.400 l-2 .800z M569.400 707.200 l1.800-.600 l.800 1.200 l-1.600.400z" fill="#3a3e4a"/>
<path d="M588 706 q3 1 4 3 l-3 .600z" fill="#4a4e66"/>
</g></g>
<!-- task view -->
<rect x="609" y="696.800" width="11.300" height="10.400" fill="#f2f2f0"/>
<path d="M605 700.500 h6 v6 h5.800 v4.600 h-11.800z" fill="#141414"/>
<rect x="611" y="701" width="5.600" height="5.500" fill="#c4c4c4"/>
<!-- explorer -->
<path d="M634 698.400 q0-1.400 1.400-1.400 h5 l1.600 1.800 h7.600 q1.400 0 1.400 1.400 v9.400 q0 1.400-1.400 1.400 h-14.200 q-1.400 0-1.400-1.400z" fill="#f0b52c"/><path d="M634 702 h17 v7.600 q0 1.400-1.400 1.400 h-14.200 q-1.400 0-1.400-1.400z" fill="#fbd650"/><rect x="637" y="707.600" width="11" height="3.400" fill="#3f8fd8"/>
<!-- edge -->
<circle cx="670.600" cy="703.800" r="8.200" fill="#1b7fd0"/><path d="M662.600 705 q1-9 9-9 q7 0 7.600 7 h-10 q0 5 6 5 q-5 3.500-9.500 0 q-3-2.500-3.100-3z" fill="#35c0e8"/><path d="M666.500 703 q.500-3.500 4.500-3.500 q3.500 0 3.500 3.500z" fill="#eef6fb"/><path d="M663 707 q4 6 11 3 q-6 .500-8-5z" fill="#4ad07a"/>
<!-- chrome -->
<path d="M700 703.800 L692.900 699.700 A8.200 8.200 0 0 1 707.100 699.700z" fill="#e4443a"/>
<path d="M700 703.800 L707.100 699.700 A8.200 8.200 0 0 1 700 712z" fill="#f9bc15"/>
<path d="M700 703.800 L700 712 A8.200 8.200 0 0 1 692.900 699.700z" fill="#2fa44f"/>
<path d="M700 699.900 h7.200" stroke="#e4443a" stroke-width="1"/>
<circle cx="700" cy="703.800" r="3.900" fill="#f4f4f4"/><circle cx="700" cy="703.800" r="3" fill="#4285f4"/>
<!-- gns3 chameleon -->
<circle cx="729.500" cy="704.600" r="7.200" fill="#3a72b8"/><path d="M726 698 q6-4 9 1 q-4-1-5 2 q6 1 5 6 q-1 4-6 4 q3-3 0-5 q-5-2-3-8z" fill="#5aa0dc"/><circle cx="727.600" cy="706.600" r="2.700" fill="#eaf2fa"/><circle cx="733" cy="698.600" r="1.300" fill="#f4d23a"/>
<!-- yellow/black app -->
<rect x="751" y="695.600" width="17" height="16.600" fill="#222"/><path d="M751 712.200 v-7 l6-4 l3 3 l4-6 h4 v4 l-5 6 l-3-2 l-4 6z" fill="#f2b53a"/><rect x="752.500" y="697" width="5" height="4" fill="#d9d2c2"/>
<!-- obs -->
<circle cx="787.600" cy="705" r="7.400" fill="#222"/><circle cx="787.600" cy="705" r="3.400" fill="none" stroke="#ddd" stroke-width="1.200"/><circle cx="794.600" cy="698.400" r="4" fill="#e8101c"/>
<!-- pointofix -->
<rect x="810.500" y="696.400" width="15" height="15" fill="#d8ecf0"/><path d="M810.500 696.400h7l-7 8z" fill="#f2d96a"/><path d="M825.500 696.400v8l-8-8z" fill="#9fd5e8"/><path d="M810.500 711.400h6l-6-6z" fill="#f0b6c4"/><path d="M814 699l8 8" stroke="#d03a4a" stroke-width="1.200"/><circle cx="819.400" cy="706.400" r="2.400" fill="#d0283a"/><path d="M819.600 706.600v6l1.600-1.400l1.200 2.400l1-.500l-1.200-2.300h2z" fill="#fff" stroke="#333" stroke-width=".500"/>
<!-- putty -->
<rect x="846" y="696" width="9" height="7" fill="#c9d4e4" stroke="#223" stroke-width=".900"/><rect x="840.600" y="702.600" width="9" height="7" fill="#c9d4e4" stroke="#223" stroke-width=".900"/><rect x="847.400" y="697.400" width="6.200" height="4.200" fill="#3a4ad0"/><rect x="842" y="704" width="6.200" height="4.200" fill="#3a4ad0"/><path d="M850.500 703.500l-2 2M843 711.500h7M851 706h4" stroke="#223" stroke-width="1"/><path d="M851 705.500l2.500 3.500l-3 .5z" fill="#e8d23a"/>
<!-- indicators -->
<g fill="#8d8d80"><rect x="640.200" y="715.600" width="3.600" height="1.600" rx=".800"/><rect x="698.200" y="715.600" width="3.600" height="1.600" rx=".800"/><rect x="728.200" y="715.600" width="3.600" height="1.600" rx=".800"/><rect x="757.600" y="715.600" width="3.600" height="1.600" rx=".800"/><rect x="786.400" y="715.600" width="3.600" height="1.600" rx=".800"/><rect x="814.400" y="715.600" width="7" height="1.600" rx=".800"/></g>
<rect x="843.600" y="715.600" width="7" height="1.600" rx=".800" fill="#2f7fd0"/>
</svg>
<div class="t tk" style="left:33px;top:694.300px;font-size:7.500px">21°C</div>
<div class="t tk" style="left:33px;top:705px;color:#555;font-size:8.400px">Mayorm. nublado</div>
<div class="t tk" style="left:475px;top:699px;font-size:8.300px;color:#444">Buscar</div>
<div class="t tk" style="left:1200px;width:67.500px;text-align:right;top:693.500px;letter-spacing:.150px">08:44</div>
<div class="t tk" style="left:1200px;width:67.500px;text-align:right;top:705px;letter-spacing:.350px">17/01/2026</div>

</div>
</body>
</html>
